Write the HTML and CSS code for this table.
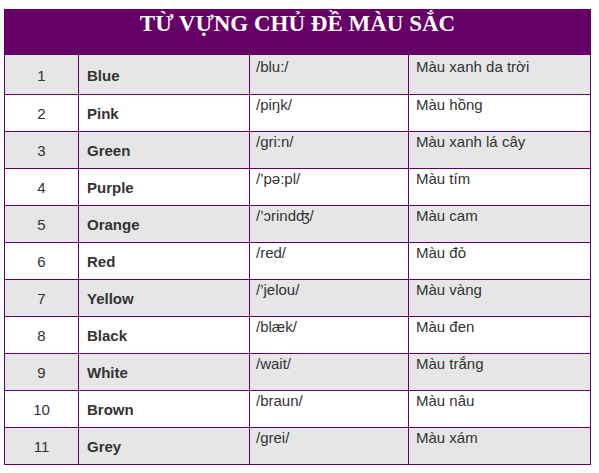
FILE: index.html
```html
<!DOCTYPE html>
<html lang="vi">
<head>
<meta charset="utf-8">
<title>Từ vựng chủ đề màu sắc</title>
<link rel="stylesheet" href="styles.css">
</head>
<body>
<div class="vocab">
  <div class="head">TỪ VỰNG CHỦ ĐỀ MÀU SẮC</div>
  <div class="row odd first"><div class="c num">1</div><div class="c word">Blue</div><div class="c ipa">/blu:/</div><div class="c mean">Màu xanh da trời</div></div>
  <div class="row"><div class="c num">2</div><div class="c word">Pink</div><div class="c ipa">/piŋk/</div><div class="c mean">Màu hồng</div></div>
  <div class="row odd"><div class="c num">3</div><div class="c word">Green</div><div class="c ipa">/gri:n/</div><div class="c mean">Màu xanh lá cây</div></div>
  <div class="row"><div class="c num">4</div><div class="c word">Purple</div><div class="c ipa">/’pə:pl/</div><div class="c mean">Màu tím</div></div>
  <div class="row odd"><div class="c num">5</div><div class="c word">Orange</div><div class="c ipa">/’ɔrindʤ/</div><div class="c mean">Màu cam</div></div>
  <div class="row"><div class="c num">6</div><div class="c word">Red</div><div class="c ipa">/red/</div><div class="c mean">Màu đỏ</div></div>
  <div class="row odd"><div class="c num">7</div><div class="c word">Yellow</div><div class="c ipa">/’jelou/</div><div class="c mean">Màu vàng</div></div>
  <div class="row"><div class="c num">8</div><div class="c word">Black</div><div class="c ipa">/blæk/</div><div class="c mean">Màu đen</div></div>
  <div class="row odd"><div class="c num">9</div><div class="c word">White</div><div class="c ipa">/wait/</div><div class="c mean">Màu trắng</div></div>
  <div class="row"><div class="c num">10</div><div class="c word">Brown</div><div class="c ipa">/braun/</div><div class="c mean">Màu nâu</div></div>
  <div class="row odd"><div class="c num">11</div><div class="c word">Grey</div><div class="c ipa">/grei/</div><div class="c mean">Màu xám</div></div>
</div>
</body>
</html>
```
FILE: styles.css
```css
html, body {
  margin: 0;
  padding: 0;
  background: #ffffff;
}

body {
  font-family: "Liberation Sans", Arial, sans-serif;
  font-size: 15px;
  color: #333333;
}

.vocab {
  margin: 9px 0 0 4px;
  width: 587px;
}

.head {
  background: #660066;
  color: #ffffff;
  height: 46px;
  box-sizing: border-box;
  padding-top: 2px;
  font-family: "Liberation Serif", "Times New Roman", serif;
  font-weight: bold;
  font-size: 23px;
  line-height: 26px;
  text-align: center;
}

.row {
  display: grid;
  grid-template-columns: 74px 171px 159px 182px;
  height: 37px;
  box-sizing: border-box;
  border-left: 1px solid #660066;
  border-bottom: 1px solid #660066;
  background: #ffffff;
}

.row.odd {
  background: #e6e6e6;
}

.row.first {
  height: 40px;
}

.c {
  border-right: 1px solid #660066;
  line-height: 17px;
}

.num {
  display: flex;
  align-items: center;
  justify-content: center;
  padding-top: 1px;
}

.word {
  display: flex;
  align-items: center;
  padding: 1px 0 0 8px;
  font-weight: bold;
}

.ipa {
  padding: 1px 0 0 6px;
}

.mean {
  padding: 1px 0 0 7px;
}

.first .ipa,
.first .mean {
  padding-top: 3px;
}
```
